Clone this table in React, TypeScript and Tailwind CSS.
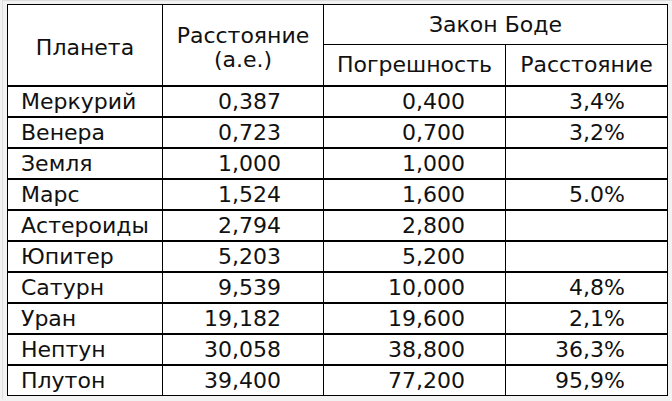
import React from "react";

const rows: [string, string, string, string][] = [
  ["Меркурий", "0,387", "0,400", "3,4%"],
  ["Венера", "0,723", "0,700", "3,2%"],
  ["Земля", "1,000", "1,000", ""],
  ["Марс", "1,524", "1,600", "5.0%"],
  ["Астероиды", "2,794", "2,800", ""],
  ["Юпитер", "5,203", "5,200", ""],
  ["Сатурн", "9,539", "10,000", "4,8%"],
  ["Уран", "19,182", "19,600", "2,1%"],
  ["Нептун", "30,058", "38,800", "36,3%"],
  ["Плутон", "39,400", "77,200", "95,9%"],
];

export default function App() {
  return (
    <div
      className="w-[672px] h-[401px] bg-[#f2f2f2] text-[#111]"
      style={{ fontFamily: '"DejaVu Sans", Verdana, sans-serif' }}
    >
      <div className="w-[670px] h-[399px] ml-[2px] pt-[3px] pl-[3px] border-l border-t border-[#dcdcdc]">
        <div className="ml-[1px] w-[661px] border border-black bg-white text-[22px]">
          {/* header */}
          <div className="flex h-[80px]">
            <div className="w-[155px] border-r border-black flex items-center justify-center pt-[4px]">
              Планета
            </div>
            <div className="w-[161px] border-r border-black flex flex-col items-center justify-center leading-[24px] pt-[5px]">
              <span>Расстояние</span>
              <span>(а.е.)</span>
            </div>
            <div className="w-[343px] flex flex-col">
              <div className="h-[40px] border-b border-black flex items-center justify-center">
                Закон Боде
              </div>
              <div className="flex flex-1">
                <div className="w-[182px] border-r border-black flex items-center justify-center pb-[2px]">
                  Погрешность
                </div>
                <div className="w-[161px] flex items-center justify-center pb-[2px]">
                  Расстояние
                </div>
              </div>
            </div>
          </div>
          {rows.map((r) => (
            <div key={r[0]} className="flex h-[31px] border-t-2 border-black leading-none">
              <div className="w-[155px] border-r border-black flex items-center pl-[13px]">
                {r[0]}
              </div>
              <div className="w-[161px] border-r border-black flex items-center justify-end pr-[42px]">
                {r[1]}
              </div>
              <div className="w-[182px] border-r border-black flex items-center justify-end pr-[40px]">
                {r[2]}
              </div>
              <div className="w-[161px] flex items-center justify-end pr-[42px]">
                {r[3]}
              </div>
            </div>
          ))}
        </div>
      </div>
    </div>
  );
}
